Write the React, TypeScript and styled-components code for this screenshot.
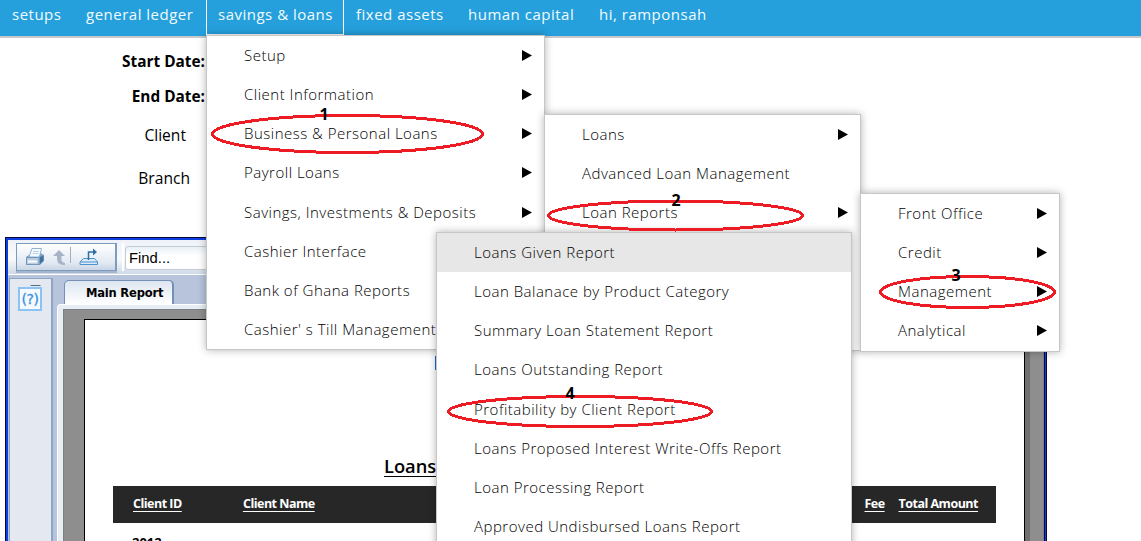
import React from 'react';
import styled, { createGlobalStyle } from 'styled-components';

const Global = createGlobalStyle`
  * { box-sizing: border-box; }
  body { margin: 0; background: #fff; overflow: hidden; }
`;

const menuFont = `"Open Sans", "Noto Sans", sans-serif`;
const formFont = `"Open Sans", "Noto Sans", sans-serif`;

const Screen = styled.div`
  position: relative;
  width: 1141px;
  height: 541px;
  overflow: hidden;
  display: flex;
  flex-direction: column;
  color: #000;
`;

const NavBar = styled.nav`
  flex: none;
  display: flex;
  height: 38px;
  background: #25a0dc;
  border-bottom: 2px solid #c9c9c9;
`;

const NavItem = styled.a<{ $width: number; $active?: boolean; $tracking?: number }>`
  width: ${p => p.$width}px;
  height: ${p => (p.$active ? 35 : 36)}px;
  padding: 4px 0 0 11px;
  border: solid ${p => (p.$active ? '#fff' : 'transparent')};
  border-width: 0 1px 1px;
  font: 400 15px/21px ${menuFont};
  letter-spacing: ${p => p.$tracking ?? 0.5}px;
  color: #f2fbff;
  white-space: nowrap;
`;

const Filters = styled.form`
  flex: none;
  width: 205px;
  height: 199px;
  padding-top: 13px;
  display: flex;
  flex-direction: column;
`;

const FieldName = styled.label<{ $height: number; $plain?: boolean }>`
  height: ${p => p.$height}px;
  padding-right: ${p => (p.$plain ? 15 : 0)}px;
  text-align: right;
  white-space: nowrap;
  font: ${p => (p.$plain ? '400 15.6px' : '700 15.4px')}/21px ${formFont};
`;

const Viewer = styled.section`
  flex: none;
  width: 1042px;
  height: 320px;
  margin-left: 5px;
  border: solid #0b3fe0;
  border-width: 3px 2px 0 3px;
  box-shadow: inset -1px 0 0 #02093a;
  outline: 1px solid #02093a;
  outline-offset: -1px;
  clip-path: inset(0);
  background: #b7c4db;
  padding-right: 1px;
  display: flex;
  flex-direction: column;
`;

const Toolbar = styled.div`
  flex: none;
  height: 35px;
  padding: 3px 0 0 8px;
  display: flex;
  gap: 5px;
  background: linear-gradient(#eef2f8, #f8fafc 55%, #cfd9e8);
  border-bottom: 1px solid #fff;
`;

const ToolGroup = styled.div`
  width: 101px;
  height: 28px;
  display: flex;
  align-items: center;
  gap: 8px;
  padding-left: 8px;
  border: 1px solid #7d9bbd;
  border-right-width: 2px;
  background: linear-gradient(#fff, #e3eaf3 70%, #c9d6e6);
  box-shadow: 0 2px 0 #a3b6ce;
`;

const Divider = styled.span`
  width: 2px;
  height: 28px;
  background: #fff;
`;

const FindBox = styled.div`
  width: 200px;
  height: 24px;
  margin: 3px 0 0 -4px;
  padding-left: 3px;
  border: 1px solid #c5cbd3;
  border-radius: 3px;
  background: linear-gradient(#e8f1f9, #fff 40%);
  font: 14.8px/22px "Liberation Sans", sans-serif;
`;

const ViewerBody = styled.div`
  flex: 1;
  display: flex;
  gap: 4px;
  padding: 3px 0 0 1px;
`;

const SidePanel = styled.aside`
  width: 44px;
  padding: 5px 0 0 8px;
  border: 1px solid #8fa5c4;
  border-right-width: 2px;
  background: #e4e9f1;
`;

const ReportColumn = styled.div`
  flex: 1;
  display: flex;
  flex-direction: column;
  padding-top: 2px;
`;

const Tab = styled.div`
  width: 110px;
  height: 24px;
  margin-left: 7px;
  padding-left: 21px;
  border: 1px solid #7590b6;
  border-right-width: 2px;
  border-bottom: 0;
  border-radius: 5px 5px 0 0;
  background: linear-gradient(#dde6f1, #fff);
  font: bold 12.8px/23px "DejaVu Sans Condensed", "DejaVu Sans", sans-serif;
  font-stretch: condensed;
  letter-spacing: -0.2px;
  white-space: nowrap;
`;

const ReportFrame = styled.div`
  flex: 1;
  padding: 4px 0 0 5px;
  border: 1px solid #fff;
  border-right: 0;
  border-radius: 4px 0 0;
  background: #e7edf5;
`;

const Canvas = styled.div`
  height: 100%;
  padding: 9px 18px 0 20px;
  border: 1px solid #7f7f7f;
  background: #8e8e8e;
`;

const Paper = styled.article`
  height: 100%;
  display: flex;
  flex-direction: column;
  padding: 136px 28px 0;
  border: 1px solid #000;
  box-shadow: 5px 0 0 #707070;
  background: #fff;
`;

const ReportTitle = styled.h1`
  margin: 0 0 9px 271px;
  width: 120px;
  height: 21px;
  font: 600 18.300px/20px ${formFont};
  text-decoration: underline;
  text-underline-offset: 3px;
  text-decoration-thickness: 1px;
`;

const TableHead = styled.div`
  width: 883px;
  height: 37px;
  flex: none;
  display: flex;
  padding: 8px 18px 0 20px;
  background: #272727;
`;

const HeadCell = styled.span<{ $width?: number }>`
  width: ${p => (p.$width ? `${p.$width}px` : 'auto')};
  font: 700 12.5px/19px ${formFont};
  letter-spacing: -0.5px;
  color: #fff;
  text-decoration: underline;
  text-underline-offset: 3px;
  white-space: nowrap;
`;

const YearRow = styled.div`
  padding: 9px 0 0 19px;
  font: 700 13px/20px ${formFont};
`;

const MenuPanel = styled.ul<{ $x: number; $y: number; $width: number }>`
  position: absolute;
  left: ${p => p.$x}px;
  top: ${p => p.$y}px;
  width: ${p => p.$width}px;
  margin: 0;
  padding: 0;
  list-style: none;
  background: #fff;
  border: 1px solid #c6c6c6;
  box-shadow: 0 0 8px rgba(0, 0, 0, 0.3);
`;

const MenuRow = styled.li<{ $hover?: boolean }>`
  height: 39.15px;
  padding: 0 12px 0 37px;
  display: flex;
  align-items: center;
  justify-content: space-between;
  background: ${p => (p.$hover ? '#e7e7e7' : 'transparent')};
  font: 300 15px/21px ${menuFont};
  color: #000;
  white-space: nowrap;
`;

const MenuText = styled.span<{ $tracking: number }>`
  letter-spacing: ${p => p.$tracking}px;
`;

const FocusMark = styled.span`
  position: absolute;
  left: 435px;
  top: 356px;
  width: 1px;
  height: 14px;
  background: #176bd0;
`;

const Marks = styled.svg`
  position: absolute;
  inset: 0;
  pointer-events: none;
`;

const StepNumber = styled.b<{ $x: number; $y: number }>`
  position: absolute;
  left: ${p => p.$x - 10}px;
  top: ${p => p.$y - 11}px;
  width: 20px;
  text-align: center;
  font: 700 16px/20px ${formFont};
`;

type Entry = { text: string; sub?: boolean; hover?: boolean; tracking?: number };

const Arrow = () => (
  <svg width="10" height="11" viewBox="0 0 10 11"><path d="M0 0 L10 5.5 L0 11Z" /></svg>
);

function Menu({ x, y, width, entries }: { x: number; y: number; width: number; entries: Entry[] }) {
  return (
    <MenuPanel $x={x} $y={y} $width={width}>
      {entries.map((e, i) => (
        <MenuRow key={i} $hover={e.hover}>
          <MenuText $tracking={e.tracking ?? 0.5}>{e.text}</MenuText>
          {e.sub && <Arrow />}
        </MenuRow>
      ))}
    </MenuPanel>
  );
}

const savings: Entry[] = [
  { text: 'Setup', sub: true },
  { text: 'Client Information', sub: true },
  { text: 'Business & Personal Loans', sub: true },
  { text: 'Payroll Loans', sub: true },
  { text: 'Savings, Investments & Deposits', sub: true },
  { text: 'Cashier Interface' },
  { text: 'Bank of Ghana Reports' },
  { text: "Cashier' s Till Management" },
];

const personal: Entry[] = [
  { text: 'Loans', sub: true },
  { text: 'Advanced Loan Management' },
  { text: 'Loan Reports', sub: true },
  { text: '' },
  { text: '' },
  { text: '' },
];

const reports: Entry[] = [
  { text: 'Front Office', sub: true },
  { text: 'Credit', sub: true },
  { text: 'Management', sub: true },
  { text: 'Analytical', sub: true },
];

const management: Entry[] = [
  { text: 'Loans Given Report', hover: true },
  { text: 'Loan Balanace by Product Category' },
  { text: 'Summary Loan Statement Report' },
  { text: 'Loans Outstanding Report' },
  { text: 'Profitability by Client Report' },
  { text: 'Loans Proposed Interest Write-Offs Report' },
  { text: 'Loan Processing Report' },
  { text: 'Approved Undisbursed Loans Report' },
];

const PrintIcon = () => (
  <svg width="20" height="18" viewBox="0 0 20 18">
    <path d="M7 0.500 L16.500 0.500 L14.500 9 L4 9Z" fill="#f4faff" stroke="#8fb4d4" />
    <path d="M8 3.500h6M7.500 5.500h6" stroke="#b9d3e8" />
    <path d="M1 9 L4 7 V9 H14 L15.500 5 L19 7 V13 L15 17 H1Z" fill="#7fa3c4" />
    <path d="M1.500 9.500 H14 V16.500 H1.500Z" fill="#b9cde2" stroke="#7396b8" />
    <path d="M3 13.500h9" stroke="#fff" strokeWidth="2" />
    <path d="M15 9 L18.500 7.500 V12.500 L15 16Z" fill="#41729f" />
  </svg>
);

const UpIcon = () => (
  <svg width="13" height="15" viewBox="0 0 13 15">
    <path d="M6 0 L12 6 H8.500 V10 Q8.500 12 12 13 V15 Q4 15 4 9 V6 H0Z" fill="#a9b3c6" />
  </svg>
);

const ExportIcon = () => (
  <svg width="20" height="18" viewBox="0 0 20 18" fill="none">
    <path d="M4.500 10.500 H15.500 L18.500 14 V16.500 H1 V14Z" fill="#d8ebfa" stroke="#4f92c9" />
    <path d="M1 14h18" stroke="#4f92c9" />
    <path d="M9.500 12 V4 H16" stroke="#2f6fa6" strokeWidth="1.500" />
    <path d="M14 0.500 L18 4 L14 7.500Z" fill="#2f6fa6" />
  </svg>
);

const HelpIcon = () => (
  <svg width="24" height="27" viewBox="0 0 24 27">
    <path d="M12.500 1.500h10" stroke="#506f8b" />
    <rect x="1" y="4" width="22" height="22" fill="#f4faff" stroke="#8cc3f5" strokeWidth="2" />
    <text x="12" y="20" textAnchor="middle" fontFamily="DejaVu Sans" fontSize="14" letterSpacing="-0.5" fill="#3b8fdc" stroke="#3b8fdc" strokeWidth="0.3">(?)</text>
  </svg>
);

const Bar = styled.span`
  width: 1px;
  height: 16px;
  margin: -4px 0 0 -4px;
  background: #a4adc0;
`;

export default function App() {
  return (
    <Screen>
      <Global />
      <NavBar>
        <NavItem $width={74}>setups</NavItem>
        <NavItem $width={132}>general ledger</NavItem>
        <NavItem $width={138} $active>savings &amp; loans</NavItem>
        <NavItem $width={112}>fixed assets</NavItem>
        <NavItem $width={131}>human capital</NavItem>
        <NavItem $width={140}>hi, ramponsah</NavItem>
      </NavBar>
      <Filters>
        <FieldName $height={35}>Start Date:</FieldName>
        <FieldName $height={39}>End Date:</FieldName>
        <FieldName $height={43} $plain>Client&nbsp;</FieldName>
        <FieldName $height={30} $plain>Branch</FieldName>
      </Filters>
      <Viewer>
        <Toolbar>
          <ToolGroup><PrintIcon /><UpIcon /><Bar /><ExportIcon /></ToolGroup>
          <Divider />
          <FindBox>Find...</FindBox>
        </Toolbar>
        <ViewerBody>
          <SidePanel><HelpIcon /></SidePanel>
          <ReportColumn>
            <Tab>Main Report</Tab>
            <ReportFrame>
              <Canvas>
                <Paper>
                  <ReportTitle>Loans Given</ReportTitle>
                  <TableHead>
                    <HeadCell $width={110}>Client ID</HeadCell>
                    <HeadCell $width={622}>Client Name</HeadCell>
                    <HeadCell $width={34}>Fee</HeadCell>
                    <HeadCell>Total Amount</HeadCell>
                  </TableHead>
                  <YearRow>2012</YearRow>
                </Paper>
              </Canvas>
            </ReportFrame>
          </ReportColumn>
        </ViewerBody>
      </Viewer>
      <Menu x={206} y={35} width={339} entries={savings} />
      <Menu x={544} y={114} width={317} entries={personal} />
      <Menu x={860} y={193} width={200} entries={reports} />
      <FocusMark />
      <Menu x={436} y={232} width={416} entries={management} />
      <Marks width="1141" height="541" fill="none" stroke="#ed1c24" strokeWidth="3" shapeRendering="crispEdges">
        <ellipse cx="347.500" cy="134" rx="135" ry="18.500" />
        <ellipse cx="675.500" cy="215.500" rx="127" ry="14.500" />
        <ellipse cx="967.500" cy="292" rx="87" ry="15.500" />
        <ellipse cx="580" cy="411.500" rx="131.500" ry="15" />
      </Marks>
      <StepNumber $x={324} $y={115}>1</StepNumber>
      <StepNumber $x={676} $y={201}>2</StepNumber>
      <StepNumber $x={956} $y={276}>3</StepNumber>
      <StepNumber $x={570} $y={394}>4</StepNumber>
    </Screen>
  );
}
